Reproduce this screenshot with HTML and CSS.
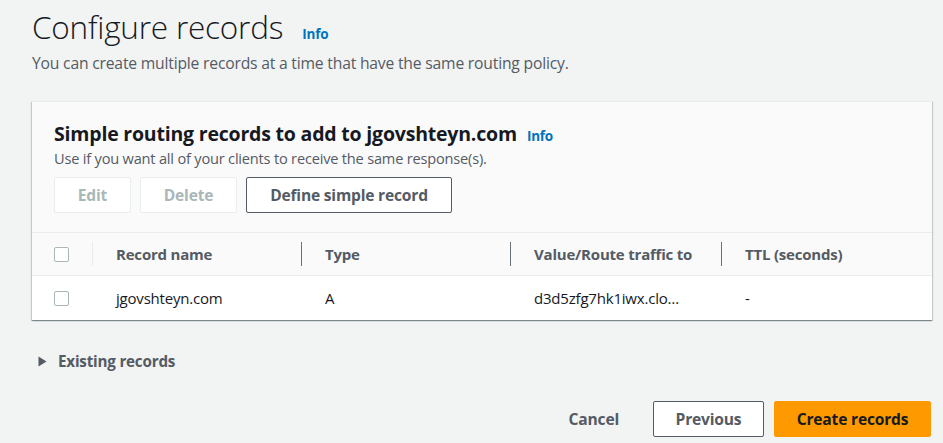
FILE: index.html
```html
<!DOCTYPE html>
<html>
<head>
<meta charset="utf-8">
<link rel="stylesheet" href="styles.css">
</head>
<body>
<div class="page">
  <div class="page-head">
    <h1 class="title">Configure records <a class="info info-title">Info</a></h1>
    <p class="subtitle">You can create multiple records at a time that have the same routing policy.</p>
  </div>

  <div class="card">
    <div class="card-head">
      <h2 class="card-title">Simple routing records to add to jgovshteyn.com <a class="info info-card">Info</a></h2>
      <p class="card-desc">Use if you want all of your clients to receive the same response(s).</p>
      <div class="actions">
        <button class="btn btn-disabled btn-edit">Edit</button>
        <button class="btn btn-disabled btn-delete">Delete</button>
        <button class="btn btn-normal btn-define">Define simple record</button>
      </div>
    </div>
    <div class="table">
      <div class="row row-head">
        <div class="cell cell-check"><span class="checkbox"></span><span class="sep sep-light"></span></div>
        <div class="cell cell-name">Record name<span class="sep"></span></div>
        <div class="cell cell-type">Type<span class="sep"></span></div>
        <div class="cell cell-value">Value/Route traffic to<span class="sep"></span></div>
        <div class="cell cell-ttl">TTL (seconds)</div>
      </div>
      <div class="row row-body">
        <div class="cell cell-check"><span class="checkbox"></span></div>
        <div class="cell cell-name">jgovshteyn.com</div>
        <div class="cell cell-type">A</div>
        <div class="cell cell-value">d3d5zfg7hk1iwx.clo…</div>
        <div class="cell cell-ttl">-</div>
      </div>
    </div>
  </div>

  <div class="expander">
    <svg class="caret" width="9" height="11" viewBox="0 0 9 11"><path d="M0.5 0.5 L8.5 5.5 L0.5 10.5 Z" fill="#545b64"/></svg>
    <span>Existing records</span>
  </div>

  <div class="footer">
    <button class="btn btn-link">Cancel</button>
    <button class="btn btn-normal btn-prev">Previous</button>
    <button class="btn btn-primary">Create records</button>
  </div>
</div>
</body>
</html>
```

FILE: styles.css
```css
* { box-sizing: border-box; }

body {
  margin: 0;
  background: #f2f3f3;
  font-family: "Open Sans", "Noto Sans", sans-serif;
  color: #16191f;
}

.page {
  padding: 0 11px 0 32px;
}

.page-head {
  padding-top: 5px;
}

.title {
  margin: 0;
  font-size: 31.5px;
  font-weight: 300;
  line-height: 44px;
  height: 44px;
  letter-spacing: -0.2px;
  display: flex;
  align-items: baseline;
  white-space: nowrap;
}

.info {
  color: #0073bb;
  font-size: 13.5px;
  font-weight: 700;
  letter-spacing: -0.2px;
  line-height: 18px;
}

.info-title {
  margin-left: 19px;
}

.subtitle {
  margin: 4px 0 0;
  font-size: 15.7px;
  line-height: 20px;
  color: #545b64;
  letter-spacing: -0.2px;
  white-space: nowrap;
}

.card {
  margin-top: 28px;
  background: #ffffff;
  border-top: 1px solid #eaeded;
  box-shadow: 0 1px 1px 0 rgba(0, 28, 36, 0.3), 1px 1px 1px 0 rgba(0, 28, 36, 0.15), -1px 1px 1px 0 rgba(0, 28, 36, 0.15);
}

.card-head {
  background: #fafafa;
  padding: 19px 22px 19px;
  border-bottom: 1px solid #eaeded;
}

.card-title {
  margin: 0;
  font-size: 19.5px;
  line-height: 26px;
  font-weight: 700;
  letter-spacing: -0.2px;
  display: flex;
  align-items: baseline;
  white-space: nowrap;
}

.info-card {
  margin-left: 10px;
}

.card-desc {
  margin: 2px 0 0;
  font-size: 14.6px;
  line-height: 18px;
  color: #545b64;
  letter-spacing: -0.2px;
  white-space: nowrap;
}

.actions {
  display: flex;
  gap: 9px;
  margin-top: 10px;
}

.btn {
  font-family: inherit;
  font-size: 15.6px;
  font-weight: 700;
  height: 36px;
  padding: 0 20px;
  border-radius: 2px;
  letter-spacing: -0.2px;
  white-space: nowrap;
  cursor: pointer;
}

.btn-disabled {
  background: #ffffff;
  border: 1px solid #eaeded;
  color: #aab7b8;
}

.btn-edit { width: 77px; }
.btn-delete { width: 97px; }
.btn-define { width: 206px; padding: 0; }

.btn-normal {
  background: #ffffff;
  border: 1px solid #545b64;
  color: #545b64;
}

.table {
  background: #ffffff;
}

.row {
  display: grid;
  grid-template-columns: 61px 209px 209px 211px 1fr;
  align-items: center;
  font-size: 15px;
}

.row-head {
  height: 43px;
  background: #fafafa;
  border-bottom: 1px solid #eaeded;
  font-weight: 700;
  color: #545b64;
}

.row-body {
  height: 44px;
  color: #16191f;
}

.cell {
  position: relative;
  height: 100%;
  display: flex;
  align-items: center;
  padding-left: 23px;
  letter-spacing: -0.2px;
  white-space: nowrap;
}

.cell-check { padding-left: 22px; }

.checkbox {
  width: 15px;
  height: 15px;
  border: 1px solid #aab7b8;
  border-radius: 2px;
  background: #ffffff;
  display: block;
}

.sep {
  position: absolute;
  right: 0;
  top: 9px;
  bottom: 9px;
  width: 1px;
  background: #687078;
}

.sep-light {
  background: #eaeded;
}

.expander {
  margin-top: 31px;
  margin-left: 6px;
  height: 20px;
  display: flex;
  align-items: center;
  gap: 11px;
  font-size: 15.2px;
  font-weight: 700;
  color: #545b64;
  letter-spacing: -0.2px;
}

.footer {
  margin-top: 30px;
  display: flex;
  justify-content: flex-end;
  gap: 10px;
  padding-right: 1px;
}

.btn-link {
  background: transparent;
  border: 1px solid transparent;
  color: #545b64;
  padding: 0 20px;
  margin-right: 3px;
}

.btn-prev { width: 111px; padding: 0; }

.btn-primary {
  background: #ff9900;
  border: 1px solid #ff9900;
  color: #16191f;
  width: 157px;
  padding: 0;
}
```
